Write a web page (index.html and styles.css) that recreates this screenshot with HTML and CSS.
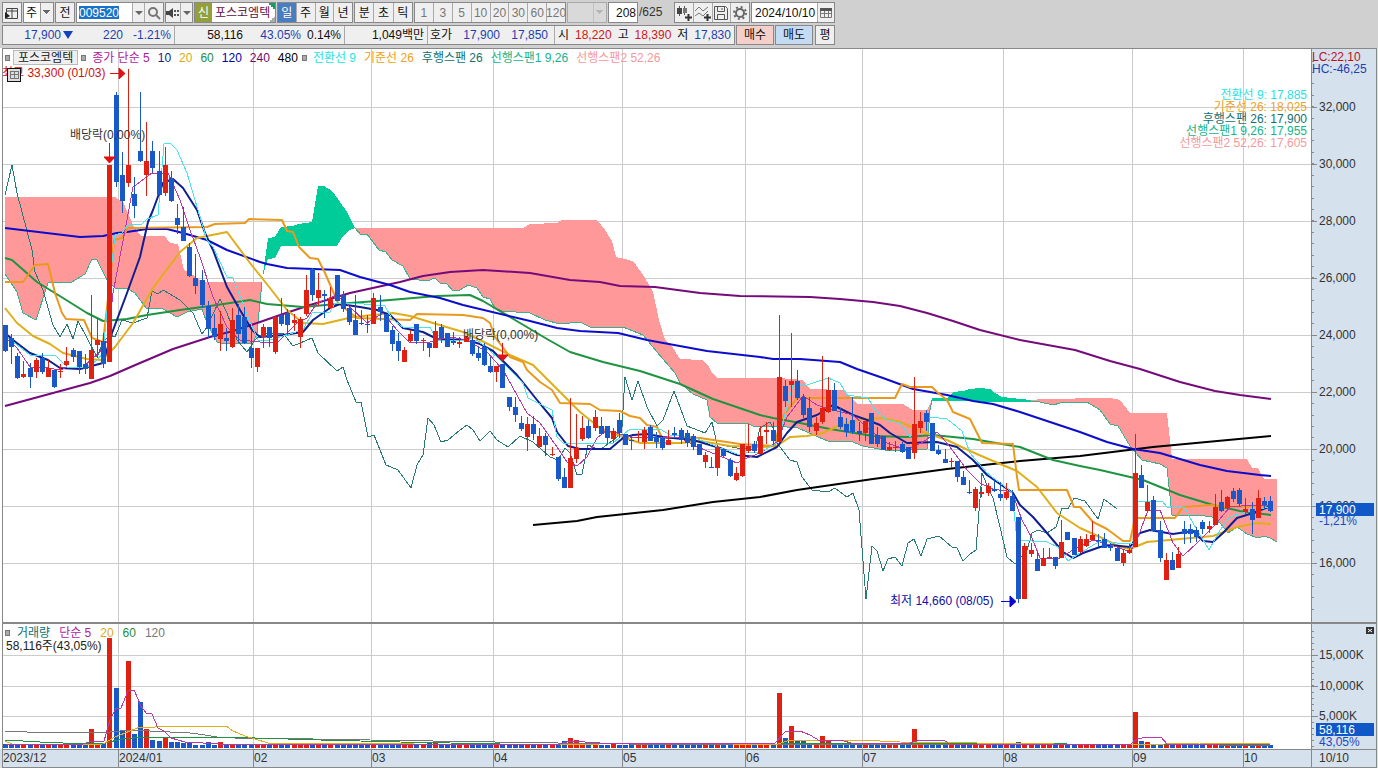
FILE: index.html
```html
<!doctype html>
<html lang="ko">
<head>
    <meta charset="utf-8">
    <title>포스코엠텍 일봉 차트</title>
    <link rel="stylesheet" href="styles.css">
</head>
<body>
<form class="toolbar" onsubmit="return false">
    <button class="btn" type="button" aria-label="창 연결">
        <svg width="16" height="16"><path d="M2.500 3.500h11v10h-11zM2.500 6h11M8 3.500v10" fill="none" stroke="#444"/><path d="M1 7l5 4-5 3z" fill="#222"/></svg>
    </button>
    <select class="kind" aria-label="구분"><option>주</option></select>
    <button class="btn" type="button">전</button>
    <div class="group code">
        <input type="text" value="009520" aria-label="종목코드">
        <button type="button" class="narrow" aria-label="종목 목록"><i class="down"></i></button>
        <button type="button" aria-label="검색"><svg width="16" height="16"><circle cx="7" cy="7" r="4" fill="none" stroke="#777" stroke-width="2"/><path d="M10 10l4 4" stroke="#777" stroke-width="2"/></svg></button>
    </div>
    <div class="group sound">
        <button type="button" aria-label="음성"><svg width="16" height="16"><path d="M1 6h3l4-3v10l-4-3H1z" fill="#444"/><path d="M10 5v2M10 9v2M13 5v2M13 9v2" stroke="#555" stroke-width="2"/></svg></button>
        <button type="button" class="narrow" aria-label="음성 설정"><i class="down"></i></button>
    </div>
    <div class="stock"><b>신</b><span>포스코엠텍</span></div>
    <div class="group days">
        <button type="button" class="on">일</button><button type="button">주</button><button type="button">월</button><button type="button">년</button>
    </div>
    <div class="group ticks">
        <button type="button">분</button><button type="button">초</button><button type="button">틱</button>
    </div>
    <div class="group minutes">
        <button type="button">1</button><button type="button">3</button><button type="button">5</button><button type="button">10</button><button type="button">20</button><button type="button">30</button><button type="button">60</button><button type="button">120</button>
    </div>
    <select class="unit" aria-label="단위" disabled><option></option></select>
    <input class="count" type="text" value="208" aria-label="봉 개수">
    <span class="total">/625</span>
    <div class="group tools">
        <button type="button" aria-label="봉 추가"><svg width="18" height="18"><path d="M4.500 2v10M9.500 2v9" stroke="#555"/><path d="M2 4h5v6H2z" fill="#444"/><path d="M8 4h4v5H8z" fill="#777"/><path d="M13.500 10v7M10 13.500h7" stroke="#333" stroke-width="2"/></svg></button>
        <button type="button" aria-label="지표 추가"><svg width="18" height="18"><path d="M1 7l4-4 4 4 5-4M1 12l4-3 4 3 5-5" stroke="#777" fill="none"/><path d="M13.500 10v7M10 13.500h7" stroke="#333" stroke-width="2"/></svg></button>
        <button type="button" aria-label="저장"><svg width="18" height="18"><path d="M2.500 2.500h11l2 2v11h-13zM5.500 2.500v5h7v-5M5.500 15.500v-5h7v5" fill="none" stroke="#555"/><path d="M10 4v2" stroke="#555"/></svg></button>
        <button type="button" aria-label="설정"><svg width="18" height="18"><circle cx="9" cy="9" r="4" fill="none" stroke="#666" stroke-width="2"/><circle cx="9" cy="9" r="6" fill="none" stroke="#666" stroke-width="2" stroke-dasharray="2 2.700"/></svg></button>
    </div>
    <div class="group date">
        <input type="text" value="2024/10/10" aria-label="기준일">
        <button type="button" aria-label="달력"><svg width="14" height="14"><path d="M1.500 2.500h11v9h-11zM1 7.500h12M5.500 4v8M9.500 4v8" fill="none" stroke="#777"/><path d="M1 2h12v3H1z" fill="#555"/></svg></button>
    </div>
</form>

<div class="quote">
    <div class="cells">
        <div class="cell price down-txt"><span>17,900</span><i class="fall"></i><span>220</span><span>-1.21%</span></div>
        <div class="cell vol"><span>58,116</span><span class="down-txt">43.05%</span><span>0.14%</span></div>
        <div class="cell amount"><span>1,049백만</span></div>
        <div class="cell ask"><span>호가</span><span class="down-txt">17,900</span><span class="down-txt">17,850</span></div>
        <div class="cell ohl"><span>시</span><span class="up-txt">18,220</span><span>고</span><span class="up-txt">18,390</span><span>저</span><span class="down-txt">17,830</span></div>
    </div>
    <button type="button" class="buy">매수</button>
    <button type="button" class="sell">매도</button>
    <button type="button" class="avg">평</button>
</div>

<main class="chart">
    <section class="pane">
        <svg id="price" viewBox="0 48 1311 575"></svg>
        <div class="legend">
            <i class="sq"></i><button type="button">포스코엠텍</button><i class="sq"></i>
            <span class="c5">종가 단순 5</span><span class="c10">10</span><span class="c20">20</span><span class="c60">60</span><span class="c120">120</span><span class="c240">240</span><span class="c480">480</span><i class="sq"></i>
            <span class="conv">전환선 9</span><span class="base">기준선 26</span><span class="lag">후행스팬 26</span><span class="span1">선행스팬1 9,26</span><span class="span2">선행스팬2 52,26</span>
        </div>
        <ul class="values">
            <li class="conv">전환선 9: 17,885</li>
            <li class="base">기준선 26: 18,025</li>
            <li class="lag">후행스팬 26: 17,900</li>
            <li class="span1">선행스팬1 9,26: 17,955</li>
            <li class="span2">선행스팬2 52,26: 17,605</li>
        </ul>
    </section>
    <svg id="priceAxis" class="axis" viewBox="1311 48 67 575"></svg>
    <section class="pane">
        <svg id="volume" viewBox="0 623 1311 126"></svg>
        <div class="legend vlegend">
            <i class="sq"></i><span class="lag">거래량</span><span class="c5">단순 5</span><span class="c20">20</span><span class="c60">60</span><span class="v120">120</span>
        </div>
        <div class="vnow">58,116주(43,05%)</div>
    </section>
    <svg id="volumeAxis" class="axis" viewBox="1311 623 67 126"></svg>
    <svg id="dates" class="axis" viewBox="0 749 1311 19"></svg>
    <svg id="dateAxis" class="axis" viewBox="1311 749 67 19"></svg>
</main>
<script src="chart.js"></script>
</body>
</html>
```
FILE: styles.css
```css
* { box-sizing: border-box; }
body { margin: 0; background: #d0d0d0; color: #111; font: 12px/14px "Liberation Sans", "Noto Sans CJK KR", sans-serif; }
button, input, select { font: inherit; color: inherit; margin: 0; padding: 0; border-radius: 0; }
button { display: flex; align-items: center; justify-content: center; background: #efefef; border: 1px solid #888; }
i { display: block; flex: none; }

/* top toolbar */
.toolbar { display: flex; gap: 1px; height: 23px; padding: 2px 2px 0; }
.btn { width: 20px; }
.kind, .unit { border: 1px solid #888; appearance: none; background-repeat: no-repeat; background-size: 4px 4px, 4px 4px, 13px 100%; background-position: right 6px top 7px, right 2px top 7px, right top; }
.kind { width: 31px; padding-left: 2px; background-color: #fff; background-image: linear-gradient(-135deg, #666 50%, transparent 50%), linear-gradient(135deg, #666 50%, transparent 50%), linear-gradient(90deg, #999 1px, #efefef 1px); }
.unit { width: 40px; border-color: #999; background-color: #ddd; background-image: linear-gradient(-135deg, #aaa 50%, transparent 50%), linear-gradient(135deg, #aaa 50%, transparent 50%), linear-gradient(90deg, #bbb 1px, #ddd 1px); }
.group { display: flex; border: 1px solid #888; background: #efefef; }
.group button { flex: 1; min-width: 0; border: 0; border-left: 1px solid #aaa; }
.group button:first-child { border-left: 0; }
.group .narrow { flex: none; width: 12px; }
.group svg { flex: none; }
.down { border: 4px solid transparent; border-top-color: #666; border-bottom: 0; }
.code { width: 88px; }
.code input { width: 55px; border: 0; padding: 0 2px; background: #fff linear-gradient(#1a73c8, #1a73c8) 2px 3px / 40px 13px no-repeat; color: #fff; }
.sound { width: 28px; }
.stock { display: flex; width: 82px; border: 1px solid #888; background: #fff; color: #5e0f42; }
.stock b { width: 17px; background: #93a03a; color: #fff; font-weight: normal; text-align: center; line-height: 20px; }
.stock span { flex: 1; padding-left: 3px; line-height: 20px; white-space: nowrap; background: linear-gradient(45deg, transparent 50%, #1c9a62 50%) right top / 7px 7px no-repeat, linear-gradient(135deg, transparent 50%, #aaa 50%) right bottom / 6px 6px no-repeat; }
.days { width: 76px; }
.ticks { width: 59px; }
.days .on { background: #4a7cc0; color: #fff; }
.minutes { width: 152px; color: #777; }
.count { width: 30px; border: 1px solid #888; text-align: right; padding-right: 1px; }
.total { width: 34px; line-height: 20px; color: #333; }
.tools { width: 76px; }
.date { width: 84px; }
.date input { width: 65px; border: 0; padding-left: 3px; }

/* quote line */
.quote { display: flex; gap: 1px; height: 25px; padding: 2px 2px 3px; }
.cells { display: flex; width: 733px; border: 1px solid #888; background: #efefef; }
.cell { display: flex; align-items: center; justify-content: flex-end; padding-right: 3px; border-right: 1px solid #aaa; white-space: nowrap; }
.cell:last-child { border-right: 0; }
.cell span { text-align: right; }
.price { width: 172px; }
.fall { margin: 0 2px; border: 5px solid transparent; border-top: 8px solid #1440c0; border-bottom: 0; }
.price span:nth-of-type(2), .price span:last-child { width: 48px; }
.vol { width: 170px; }
.vol span:nth-child(2) { width: 58px; }
.vol span:last-child { width: 40px; }
.amount { width: 83px; }
.ask { width: 127px; justify-content: space-between; padding-left: 2px; padding-right: 6px; }
.ohl { flex: 1; justify-content: space-between; padding-left: 3px; }
.down-txt { color: #1d3fb0; }
.up-txt { color: #d01818; }
.quote button { width: 38px; }
.quote .buy { background: #f5d0cb; }
.quote .sell { background: #c3dcf3; }
.quote .avg { width: 20px; margin-left: 1px; }

/* chart panes */
.chart { display: grid; grid-template-columns: 1311fr 67fr; background: #fff; }
.pane { position: relative; }
.chart svg { display: block; width: 100%; }
.axis { background: #d6e1ee; }
.legend { position: absolute; left: 5px; top: 2px; display: flex; align-items: center; gap: 8px; height: 15px; white-space: nowrap; }
.legend button { background: #efefef; border: 1px solid #bbb; height: 15px; padding: 0 4px; margin: 0 -5px; color: #222; }
.sq { width: 5px; height: 6px; border: 1px solid #777; background: #aaa; }
.legend .sq + span { margin-left: -2px; }
.legend span + .sq { margin-left: -4px; }
.vlegend { gap: 9px; }
.vnow { position: absolute; left: 6px; top: 16px; color: #222; }
.values { position: absolute; right: 4px; top: 41px; margin: 0; padding: 0; list-style: none; text-align: right; line-height: 12px; }
.c5 { color: #b020a0; }
.c10 { color: #10208c; }
.c20 { color: #dcaa10; }
.c60 { color: #1c8c3c; }
.c120 { color: #0000a8; }
.c240 { color: #6a0a6e; }
.c480 { color: #000; }
.v120 { color: #777; }
.conv { color: #28dfe8; }
.base { color: #eea020; }
.lag { color: #107070; }
.span1 { color: #14b488; }
.span2 { color: #f59a9a; }

/* svg parts */
.grid { stroke: #ccc; fill: none; shape-rendering: crispEdges; }
.frame { stroke: #888; fill: none; shape-rendering: crispEdges; }
.crisp { shape-rendering: crispEdges; }
.ln { fill: none; stroke-linejoin: round; }
```
FILE: chart.js
```js
var STEP = 6.141, X0 = 5.5;
var $ = function (id) { return document.getElementById(id); };

// direction, high, body top, body bottom, low
var candles = ('b 325 325 351 352,b 334 338 347 364,b 353 356 378 379,r 361 374 377 378,b 363 368 377 388,r 358 360 372 378,b 353 358 372 374,r 360 368 377 377,b 370 370 387 388,r 364 371 372 378,' +
'r 347 361 365 366,b 348 350 357 362,b 351 351 367 374,b 354 364 369 374,r 295 350 379 379,r 318 340 345 358,b 333 341 364 368,r 165 165 362 362,b 92 95 182 187,b 152 175 201 213,' +
'r 69 165 183 187,b 177 194 206 218,b 92 151 161 162,r 122 161 175 196,b 141 151 168 173,b 151 171 195 196,r 147 165 193 196,b 171 178 201 202,b 204 218 225 234,b 207 227 241 241,' +
'b 243 247 276 277,b 254 278 286 294,b 270 280 305 308,b 301 306 329 338,b 314 328 337 340,r 311 324 339 351,b 328 338 341 351,r 308 320 347 348,b 304 315 334 343,b 307 317 343 344,' +
'b 330 348 358 368,r 348 348 367 372,r 324 327 337 348,b 327 327 338 347,r 316 317 352 354,b 298 315 324 326,b 309 313 325 335,r 314 320 323 331,r 317 319 337 348,r 275 290 314 316,' +
'b 268 269 295 301,r 273 290 298 306,b 290 294 296 318,r 287 299 308 309,b 275 275 301 301,b 291 295 309 312,b 306 308 322 325,b 295 320 335 335,b 310 323 324 325,b 315 324 325 333,' +
'r 293 298 324 324,b 295 307 312 321,b 314 314 332 332,b 326 330 344 351,b 333 341 351 361,r 347 350 362 362,r 330 334 341 342,b 324 324 341 344,r 338 340 341 351,b 343 343 348 357,' +
'r 321 331 348 348,b 324 327 338 343,b 333 333 347 347,b 332 341 343 345,r 337 342 344 348,r 336 337 342 342,b 337 340 354 356,b 347 353 358 361,b 343 347 365 366,b 357 366 372 373,' +
'r 366 366 372 382,b 364 364 388 388,b 397 397 407 411,b 397 407 415 422,b 416 423 429 431,r 417 424 437 451,b 416 424 434 440,r 428 436 447 448,b 433 436 445 456,r 447 454 455 456,' +
'b 457 457 479 481,b 468 477 488 488,r 398 458 488 488,r 414 448 459 463,r 416 428 439 441,b 420 426 438 439,r 410 417 428 431,b 417 426 434 435,b 426 426 438 444,r 428 431 439 443,' +
'b 413 420 433 438,b 434 434 445 445,b 435 440 441 450,r 431 437 438 442,r 427 430 442 449,b 425 427 441 441,b 432 437 442 448,b 437 438 448 450,r 430 440 445 445,b 427 433 435 438,' +
'b 428 430 440 444,b 430 433 443 447,b 434 436 447 450,b 444 444 455 455,r 452 455 462 468,b 457 467 468 468,r 445 447 468 476,b 449 449 456 457,b 458 460 476 477,r 467 473 480 481,' +
'r 444 444 476 477,r 424 446 451 453,b 441 444 451 453,r 426 436 454 454,r 422 430 432 444,b 422 430 441 445,r 315 377 442 442,b 380 386 401 407,r 333 381 385 407,b 370 381 398 400,' +
'b 394 397 415 418,b 397 408 427 432,r 417 423 431 435,r 356 408 422 424,r 377 390 412 413,b 383 390 411 411,b 408 417 427 429,b 418 424 432 437,b 397 420 432 434,b 422 431 434 441,' +
'r 421 421 433 441,b 413 413 444 444,b 427 435 444 447,b 436 436 450 450,r 442 447 450 451,r 441 447 448 452,b 442 444 452 453,b 447 447 459 459,r 377 424 453 459,r 412 421 428 433,' +
'b 410 413 422 431,b 423 423 451 451,b 445 450 454 455,b 449 459 463 463,r 458 461 462 468,b 461 461 477 482,b 471 477 485 485,b 480 492 493 494,r 487 489 508 511,r 487 492 494 497,' +
'r 483 486 493 496,b 479 489 491 492,b 482 494 498 501,r 483 492 498 500,b 490 496 511 511,b 517 517 599 603,r 543 546 599 599,r 543 550 554 557,b 552 559 571 571,r 548 558 566 566,' +
'r 548 557 558 559,b 557 557 566 569,r 520 542 558 558,b 532 532 540 540,b 538 538 555 555,r 536 539 552 553,r 534 539 546 547,r 521 535 540 540,b 534 540 541 547,b 533 539 548 548,' +
'b 543 546 548 551,b 548 548 561 561,r 549 553 563 566,r 544 550 553 554,r 434 473 547 547,b 465 475 488 488,r 485 502 511 512,b 496 500 531 532,b 521 530 558 562,r 553 560 580 580,' +
'b 552 560 570 570,r 547 554 568 568,b 521 529 534 544,b 524 529 534 543,b 527 530 537 542,b 520 522 529 534,r 521 526 529 533,r 494 507 525 525,b 490 502 511 512,r 496 497 508 509,' +
'b 488 491 499 502,b 488 490 504 506,r 498 509 512 514,b 502 509 520 534,r 490 498 518 518,b 497 501 505 510,b 496 501 511 512').split(',').map(function (s) { return s.split(' '); });

var span = {
    cloudA: '5,197 115,197 123,202 128,213 133,225 141,236 165,236 170,243 178,244 180,253 184,270 193,275 202,282 262,282',
    cloudA1: '5,274 17,292 23,313 36,320 48,283 72,282 85,274 92,259 97,260 107,280 115,288 128,289 135,293 146,308 163,309 177,317 187,312 202,309 207,323 217,342 223,344 253,343 257,333 262,282',
    up1: '262,281 268,238 275,237 281,227 293,226 298,224 312,222 318,186 324,186 332,191 338,199 347,212 355,228',
    up1b: '262,281 265,268 268,259 275,258 281,246 337,246 343,236 350,230 355,228',
    cloudB: '355,228 523,228 530,224 557,223 562,220 597,220 605,230 612,241 616,257 625,259 634,262 645,278 653,292 659,320 665,340 673,348 680,359 702,360 708,365 712,373 718,378 779,378 803,380 810,389 843,390 850,397 858,404 903,404 913,410 927,410 932,400',
    cloudB1: '355,228 361,235 367,234 379,250 386,252 392,260 403,266 410,279 427,281 435,278 440,283 447,284 453,291 460,290 468,285 477,288 483,297 490,299 495,308 502,311 530,313 545,320 560,324 580,322 590,327 623,327 643,335 657,352 675,373 680,383 693,394 707,400 710,417 717,423 747,423 753,426 775,426 798,428 807,432 818,437 828,441 850,441 863,446 890,451 927,449 930,410 932,400',
    up2: '932,398 948,398 953,392 963,391 970,389 980,388 990,389 995,393 1002,397 1020,399 1031,400',
    up2b: '932,401 1031,402',
    cloudC: '1028,401 1040,399 1110,398 1120,400 1130,413 1167,413 1172,459 1247,459 1252,468 1258,468 1264,479 1277,479',
    cloudC1: '1028,401 1040,402 1053,405 1060,403 1087,402 1100,410 1110,424 1118,426 1130,446 1142,460 1160,464 1167,468 1172,515 1197,515 1212,517 1220,523 1228,533 1237,527 1247,534 1258,538 1264,536 1270,538 1277,542'
};

var lines = [
    ['#287878', 1, '5,195 12,165 17,193 32,250 35,272 43,290 53,325 60,337 67,324 73,339 78,321 87,338 97,357 103,342 110,335 115,337 122,320 133,323 147,318 152,291 158,294 163,290 180,300 193,313 202,334 207,327 220,299 227,313 237,340 247,352 255,340 262,334 283,333 293,346 312,338 318,353 337,371 343,367 347,380 356,402 361,402 368,437 374,435 386,465 398,470 411,488 417,465 423,455 428,418 434,425 441,442 448,440 460,430 467,425 473,430 480,441 490,431 497,440 508,447 520,436 533,442 550,457 558,460 565,448 570,453 577,475 582,474 588,445 600,450 617,437 622,427 625,377 632,400 638,381 647,407 657,426 663,420 674,391 687,426 705,433 712,422 717,444 737,448 755,450 760,428 770,422 775,432 777,443 790,460 797,462 802,477 812,490 828,492 835,488 840,492 847,497 853,493 859,510 866,599 872,546 877,551 883,571 888,559 895,557 902,566 908,543 914,539 921,556 927,539 939,536 952,547 957,548 963,561 970,554 976,550 982,473 987,485 993,498 1000,527 1007,557 1015,564 1027,550 1032,533 1038,530 1047,533 1056,527 1062,508 1068,509 1074,498 1085,501 1098,519 1104,499 1117,509'],
    ['#000', 2, '533,525 577,521 597,517 663,510 713,502 760,497 797,490 873,479 947,469 1020,461 1080,456 1153,447 1271,436'],
    ['#750a7a', 2, '5,406 53,393 90,383 110,376 133,366 173,349 210,337 233,331 260,322 283,314 310,305 350,293 400,282 423,276 450,272 483,270 530,273 570,280 600,282 620,286 655,287 700,293 740,296 810,297 840,299 873,302 900,306 927,313 953,321 980,330 1020,340 1075,350 1110,361 1140,369 1180,382 1215,391 1240,395 1271,399'],
    ['#1d9440', 2, '5,258 12,260 37,282 63,298 87,313 103,321 127,319 147,315 180,310 217,305 250,300 267,304 303,307 337,304 390,300 437,296 470,295 483,301 515,320 547,339 570,352 603,362 640,371 680,384 713,399 760,415 773,418 800,423 830,429 873,436 907,437 933,435 973,439 1020,447 1053,460 1080,466 1100,470 1143,480 1180,495 1213,505 1240,511 1271,515'],
    ['#0c0ccc', 2, '5,228 80,237 103,236 117,233 127,232 147,229 167,229 183,233 207,240 227,250 260,262 267,264 287,268 340,270 360,277 390,285 410,292 440,298 463,305 530,321 557,328 580,331 618,333 647,340 707,351 760,357 773,359 800,359 840,362 857,369 883,378 913,389 947,395 973,401 993,404 1020,412 1080,432 1107,442 1133,449 1160,453 1180,459 1200,465 1227,471 1260,475 1271,476'],
    ['#dfae18', 2, '5,308 17,323 33,336 50,344 63,353 87,359 102,360 115,347 133,323 153,288 180,252 197,238 227,232 250,263 270,288 287,310 303,323 323,324 353,317 393,313 410,316 433,323 463,332 480,340 510,355 533,365 557,389 580,412 600,428 623,437 640,443 680,443 700,441 730,446 763,447 777,446 790,437 807,436 823,433 840,425 863,419 883,418 900,422 923,432 947,440 970,451 993,461 1017,471 1037,487 1057,513 1080,528 1100,537 1120,547 1130,549 1147,542 1180,539 1213,536 1237,527 1257,523 1271,524'],
    ['#e99a1e', 2, '5,282 23,282 35,265 48,264 55,293 62,313 66,319 84,320 92,338 103,342 109,290 114,240 122,238 128,228 207,227 215,224 245,223 249,219 282,220 287,231 293,232 299,247 310,258 318,259 325,273 332,289 338,303 357,318 410,320 417,314 463,315 483,318 490,323 495,337 510,357 523,362 527,370 540,382 552,390 560,403 590,404 600,410 620,411 630,416 640,418 647,425 657,427 662,438 700,438 740,444 775,446 780,420 797,398 895,398 902,384 910,387 932,387 937,392 947,400 953,412 970,419 982,443 1013,444 1017,477 1019,490 1067,490 1074,507 1080,507 1093,522 1107,529 1123,541 1130,541 1135,518 1175,518 1183,507 1212,505 1223,507 1271,506'],
    ['#101f90', 2, '5,333 13,340 30,353 48,360 60,368 80,369 103,363 112,333 127,293 140,257 148,222 153,210 163,183 173,179 183,188 197,210 205,233 213,250 227,287 240,310 252,330 260,337 283,335 303,332 313,320 330,308 340,304 360,307 377,310 390,315 403,328 423,332 437,339 467,340 480,344 493,351 517,375 537,400 552,418 557,432 568,446 580,449 610,449 623,438 633,435 647,434 663,437 693,440 720,448 737,455 757,457 777,447 787,433 797,422 817,415 833,405 853,415 870,421 880,425 890,433 907,443 937,442 957,447 973,460 987,475 1013,493 1020,505 1033,517 1047,533 1063,552 1073,558 1083,553 1100,547 1110,545 1130,547 1140,533 1150,530 1173,534 1193,531 1203,541 1213,542 1223,533 1237,518 1253,513 1271,506'],
    ['#b838a8', 1, '5,337 17,348 30,367 43,367 60,370 68,367 83,367 100,352 108,340 113,293 127,220 133,187 140,182 152,173 160,174 168,173 180,200 190,230 200,257 213,297 227,327 240,340 260,342 277,343 297,323 307,318 317,303 337,295 350,307 367,323 383,313 397,330 410,343 430,342 450,337 467,340 487,352 503,370 527,413 540,423 557,447 567,462 577,466 587,457 597,438 607,430 630,437 653,437 680,438 700,448 737,463 747,458 760,453 777,442 787,417 803,396 817,405 833,410 853,415 870,430 887,443 907,450 923,442 937,432 947,443 967,470 980,483 993,489 1012,492 1022,520 1032,538 1040,558 1060,558 1073,550 1093,540 1117,547 1130,552 1137,540 1148,510 1160,510 1173,543 1183,556 1197,543 1213,527 1230,507 1253,505 1271,506'],
    ['#48e4ea', 1, '7,337 30,355 55,355 67,367 87,368 97,360 103,353 109,290 115,235 122,233 128,225 142,224 147,219 158,215 164,144 170,143 177,150 187,173 200,217 207,240 213,247 227,277 233,278 250,322 258,340 270,340 303,330 312,313 330,312 335,303 353,303 385,306 392,319 403,327 430,327 437,340 477,340 497,357 523,383 528,398 552,410 557,437 563,443 613,443 630,429 660,429 670,435 693,437 720,448 743,456 747,452 760,452 777,443 780,433 793,385 807,385 828,378 840,383 847,395 868,398 875,410 887,420 900,423 910,437 917,427 930,417 947,419 962,431 970,453 987,473 1007,488 1012,493 1017,540 1047,542 1060,548 1068,561 1080,553 1100,541 1117,543 1133,543 1138,501 1162,501 1167,507 1184,507 1193,523 1209,550 1220,530 1230,517 1253,510 1271,507']
];

// candles whose volume bar is higher than the usual few pixels
var volTop = {14: 729, 15: 743, 16: 743, 17: 638, 18: 688, 19: 731, 20: 661, 21: 734, 22: 702, 23: 729, 24: 740, 25: 741, 26: 738, 27: 742, 28: 742, 29: 743, 30: 743, 33: 742, 35: 742, 69: 743, 70: 741, 91: 741, 92: 738, 93: 740, 94: 743, 126: 693, 127: 738, 128: 726, 129: 740, 130: 741, 133: 736, 134: 741, 148: 729, 149: 743, 165: 742, 172: 743, 184: 712, 185: 741, 186: 742, 191: 743};
var months = [[118, '2024/01'], [253, '02'], [371, '03'], [493, '04'], [622, '05'], [745, '06'], [862, '07'], [1003, '08'], [1132, '09'], [1243, '10']];

function line(x1, y1, x2, y2, cls) { return '<path class="' + cls + '" d="M' + x1 + ' ' + y1 + 'L' + x2 + ' ' + y2 + '"/>'; }
function text(x, y, s, fill) { return '<text x="' + x + '" y="' + y + '" fill="' + (fill || '#333') + '">' + s + '</text>'; }
function poly(pts, color, w) { return '<polyline class="ln' + (w == 1 ? ' crisp' : '') + '" points="' + pts + '" stroke="' + color + '" stroke-width="' + w + '"/>'; }
function area(a, b, color) { return '<polygon class="crisp" points="' + a + ' ' + b.split(' ').reverse().join(' ') + '" fill="' + color + '"/>'; }
function rect(x, y, w, h, fill) { return '<rect class="crisp" x="' + x + '" y="' + y + '" width="' + w + '" height="' + h + '" fill="' + fill + '"/>'; }
function cx(i) { return Math.floor(X0 + i * STEP) + 0.5; }
function color(d) { return d == 'r' ? '#e02010' : '#1858c8'; }

function drawPrice() {
    var s = '';
    for (var y = 107; y < 600; y += 57.1) s += line(3, Math.floor(y) + 0.5, 1311, Math.floor(y) + 0.5, 'grid');
    months.forEach(function (m) { s += line(m[0] + 0.5, 49, m[0] + 0.5, 623, 'grid'); });
    s += area(span.cloudA, span.cloudA1, '#ff9999') + area(span.cloudB, span.cloudB1, '#ff9999') + area(span.cloudC, span.cloudC1, '#ff9999');
    s += area(span.up1, span.up1b, '#00cc99') + area(span.up2, span.up2b, '#00cc99');
    s += poly(span.cloudA1, '#3cb08c', 1) + poly(span.cloudB1, '#3cb08c', 1) + poly(span.cloudC1, '#3cb08c', 1);
    lines.forEach(function (l) { s += poly(l[2], l[0], l[1]); });
    candles.forEach(function (c, i) {
        var x = cx(i), f = color(c[0]);
        s += rect(x - 0.5, c[1], 1, c[4] - c[1], f) + rect(x - 2.5, c[2], 5, Math.max(1, c[3] - c[2]), f);
    });
    // dividend and high / low marks
    s += text(70, 139, '배당락(0,00%)') + text(463, 339, '배당락(0,00%)');
    s += '<path d="M109.500 143v16M104 157h11l-5.500 6zM502.500 343v16M497 355h11l-5.500 6z" fill="#e01010" stroke="#e01010"/>';
    s += text(2, 77, '최고 33,300 (01/03)', '#d01010') + '<path d="M110 73.500h10M119 68l6 5.500-6 5.500z" fill="#e01010" stroke="#e01010"/>';
    s += text(890, 605, '최저 14,660 (08/05)', '#1010a8') + '<path d="M1001 601.500h10M1010 596l6 5.500-6 5.500z" fill="#0808d0" stroke="#0808d0"/>';
    s += '<path class="crisp" d="M7.500 68.500h13v13h-13z" fill="#ddd" stroke="#111"/><path class="crisp" d="M10 71.500h9M10 74.500h9M10 78.500h9M10.500 71v8M14.500 71v8M18.500 71v8" stroke="#777"/>';
    s += '<path class="frame" d="M2.500 623V48.500H1311M2 622.500H1311"/>';
    $('price').innerHTML = s;
}

function drawVolume() {
    var s = '';
    [655, 686, 716].forEach(function (y) { s += line(3, y + 0.5, 1311, y + 0.5, 'grid'); });
    months.forEach(function (m) { s += line(m[0] + 0.5, 624, m[0] + 0.5, 749, 'grid'); });
    candles.forEach(function (c, i) {
        var t = volTop[i] || (i % 3 ? 745 : 744);
        s += rect(cx(i) - 2.5, t, 5, 748 - t, color(c[0]));
    });
    s += poly('5,731 25,731 27,732 110,732 130,730 150,731 190,733 205,735 217,737 235,738 255,738 370,740 620,744 1270,745', '#777', 1);
    s += poly('5,740 40,742 85,744 105,743 122,739 145,737 255,738 320,740 400,742 500,744 780,744 860,743 1270,745', '#1d9440', 1);
    s += poly('5,741 12,744 60,745 103,744 115,737 125,733 140,727 155,727 160,726 226,726 233,731 245,736 268,743 560,745 640,743 690,743 775,745 790,740 860,740 900,742 1130,745 1200,743 1270,743', '#dfae18', 1);
    s += poly('5,744 80,745 92,741 104,741 110,720 116,708 121,708 128,691 134,690 141,706 146,713 152,714 158,728 164,731 171,738 185,742 220,744 560,744 570,741 600,743 775,743 785,732 800,731 810,735 820,741 840,740 855,744 910,743 920,740 945,741 950,744 1130,745 1137,739 1147,737 1161,737 1167,744 1270,746', '#b838a8', 1);
    s += '<path class="frame" d="M2.500 749V623.500H1311"/>';
    $('volume').innerHTML = s;
}

function drawAxes() {
    var s = '', y, i;
    for (i = 0; i < 49; i++) { y = Math.floor(61 + i * 11.42) + 0.5; s += line(1311, y, 1314, y, 'frame'); }
    for (i = 0; i < 9; i++) {
        y = Math.floor(107 + i * 57.1);
        s += line(1311, y + 0.5, 1317, y + 0.5, 'frame') + text(1319, y + 4, (32 - i * 2) + ',000');
    }
    s += text(1312, 61, 'LC:22,10', '#c01020') + text(1312, 73, 'HC:-46,25', '#1d3fb0');
    s += rect(1316, 503, 58, 13, '#1058c8') + text(1319, 514, '17,900', '#fff') + text(1319, 525, '-1,21%', '#1d48c0');
    s += '<path class="frame" d="M1311.500 48V623M1311 48.500H1376.500V623M1311 622.500H1376"/>';
    $('priceAxis').innerHTML = s;

    s = '';
    for (i = 0; i < 20; i++) { y = Math.floor(631 + i * 6.1) + 0.5; s += line(1311, y, 1314, y, 'frame'); }
    s += line(1311, 655.5, 1318, 655.5, 'frame') + line(1311, 686.5, 1318, 686.5, 'frame') + line(1311, 716.5, 1318, 716.5, 'frame');
    s += text(1319, 659, '15,000K') + text(1319, 690, '10,000K') + text(1319, 720, '5,000K');
    s += rect(1316, 723, 58, 13, '#1058c8') + text(1319, 734, '58,116', '#fff') + text(1319, 746, '43,05%', '#1d48c0');
    s += rect(1366, 627, 8, 7, '#333') + '<path d="M1368 629l4 3M1372 629l-4 3" stroke="#fff"/>';
    s += '<path class="frame" d="M1311.500 623V749M1311 623.500H1376.500V749"/>';
    $('volumeAxis').innerHTML = s;

    s = text(3, 762, '2023/12');
    months.forEach(function (m) { s += line(m[0] + 0.5, 749, m[0] + 0.5, 767, 'frame') + text(m[0] + 1, 762, m[1]); });
    s += '<path class="frame" d="M2.500 749V767M2 749.500H1311M2 767.500H1311"/>';
    $('dates').innerHTML = s;
    $('dateAxis').innerHTML = text(1319, 762, '10/10') + '<path class="frame" d="M1311.500 749V767.500H1376.500V749M1311 749.500H1376"/>';
}

drawPrice();
drawVolume();
drawAxes();
```
